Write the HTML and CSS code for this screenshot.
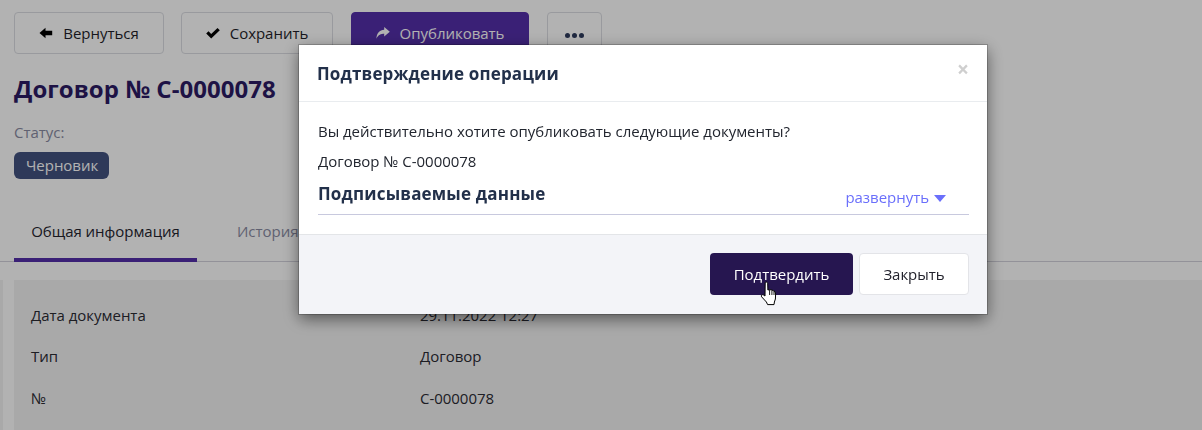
FILE: index.html
```html
<!DOCTYPE html>
<html lang="ru">
<head>
<meta charset="utf-8">
<title>Договор № С-0000078</title>
<link rel="stylesheet" href="styles.css">
</head>
<body>
<main class="page">
  <div class="toolbar">
    <button class="btn btn-back"><svg class="ico" viewBox="0 0 14 14"><path d="M0.5 7 L6.5 1.8 V4.8 H13.2 V9.2 H6.5 V12.2 Z"/></svg>Вернуться</button>
    <button class="btn btn-save"><svg class="ico" viewBox="0 0 14 14"><path d="M0.2 7.6 L2.5 5.3 L5.2 8 L11.5 1.9 L13.8 4.2 L5.2 12.4 Z"/></svg>Сохранить</button>
    <button class="btn btn-pub"><svg class="ico" viewBox="0 0 14 14"><path d="M8.2 1 L13.8 5.8 L8.2 10.6 V7.8 C5 7.8 2.4 8.6 0.4 12.8 C0.6 7.4 3.6 4 8.2 3.8 Z"/></svg>Опубликовать</button>
    <button class="btn btn-more"><span class="dot"></span><span class="dot"></span><span class="dot"></span></button>
  </div>
  <h1 class="doc-title">Договор № С-0000078</h1>
  <div class="status-label">Статус:</div>
  <span class="badge">Черновик</span>
  <nav class="tabs">
    <a class="tab active">Общая информация</a>
    <a class="tab">История</a>
  </nav>
  <div class="content">
    <div class="strip"></div>
    <section class="panel">
      <div class="row"><span class="key">Дата документа</span><span>29.11.2022 12:27</span></div>
      <div class="row"><span class="key">Тип</span><span>Договор</span></div>
      <div class="row"><span class="key">№</span><span>С-0000078</span></div>
    </section>
  </div>
</main>
<div class="overlay"></div>
<div class="modal">
  <header class="modal-head">
    <h2 class="modal-title">Подтверждение операции</h2>
    <span class="close">×</span>
  </header>
  <div class="modal-body">
    <p class="line">Вы действительно хотите опубликовать следующие документы?</p>
    <p class="line line-doc">Договор № С-0000078</p>
    <div class="signed">
      <h3 class="signed-title">Подписываемые данные</h3>
      <a class="expand">развернуть<span class="caret"></span></a>
    </div>
  </div>
  <footer class="modal-foot">
    <button class="mbtn mbtn-primary">Подтвердить</button>
    <button class="mbtn mbtn-close">Закрыть</button>
  </footer>
</div>
<svg class="cursor" viewBox="0 0 18 25"><path d="M5.2 1.5 C6.3 0.6 7.6 1.2 7.7 2.6 L7.9 9 L9.8 8.6 L11.6 9 L13.4 9.6 L15 10.6 L15.6 13 L15.4 18 L14.4 21 L14 23.6 L7.6 23.6 L6.4 21 L1.6 15.8 C0.8 14.6 1.8 13.2 3.2 13.8 L5 15 Z" fill="#fff" stroke="#000" stroke-width="1"/><path d="M9.6 9 V14 M11.9 9.4 V14 M14 10 V14" stroke="#000" stroke-width=".9" fill="none"/></svg>
</body>
</html>
```
FILE: styles.css
```css
* { box-sizing: border-box; }
html, body { margin: 0; height: 430px; overflow: hidden; }
body { background: #fff; font-family: "Open Sans", "Noto Sans", sans-serif; font-size: 15px; letter-spacing: -.03px; color: #2b2b33; }

.page { padding: 12px 0 0; height: 430px; overflow: hidden; }

.toolbar { display: flex; padding-left: 14px; gap: 17px; }
.btn { height: 42px; border: 1px solid #dcdde3; border-radius: 4px; background: #fff; font: 15px "Open Sans", "Noto Sans", sans-serif; letter-spacing: inherit; color: #1f1f2a; display: flex; align-items: center; justify-content: center; padding: 0; }
.btn-back { width: 150px; }
.btn-save { width: 152px; }
.btn-pub { width: 178px; margin-left: 1px; background: #542fa9; border-color: #542fa9; color: #fff; }
.btn-more { width: 55px; margin-left: 1px; gap: 2px; padding-top: 4px; }
.ico { width: 14px; height: 14px; margin-right: 10px; fill: currentColor; }
.btn-back .ico { fill: #000; }
.btn-save .ico { fill: #000; }
.dot { width: 5px; height: 5px; border-radius: 50%; background: #2d3a5c; }

.doc-title { margin: 18px 0 0 14px; font-size: 24px; line-height: 33px; font-weight: 700; letter-spacing: .05px; color: #2c1b64; }
.status-label { margin: 17px 0 0 14px; line-height: 20px; color: #8a8ca3; }
.badge { display: inline-block; margin: 10px 0 0 14px; height: 27px; line-height: 26px; padding: 0 11px 0 12px; border-radius: 6px; background: #435280; color: #fff; }

.tabs { display: flex; margin-top: 25px; height: 58px; border-bottom: 1px solid #d3d2dc; padding-left: 14px; }
.tab { width: 183px; height: 58px; text-align: center; line-height: 54px; color: #8a8ca3; }
.tab.active { color: #25252f; border-bottom: 4px solid #542fa9; }
.tab + .tab { text-align: left; padding-left: 40px; }

.content { display: flex; margin-top: 18px; }
.strip { width: 3px; height: 150px; background: #f3f3f3; flex: none; }
.panel { flex: 1; margin: 0 0 0 11px; height: 160px; background: #f3f3f3; padding: 14.5px 17px; }
.row { display: flex; height: 41.5px; line-height: 41.5px; }
.key { width: 389px; }

.overlay { position: fixed; inset: 0; background: rgba(0, 0, 0, .3); }

.modal { position: fixed; left: 299px; top: 45px; width: 688px; height: 269px; background: #fff; box-shadow: 0 5px 15px rgba(0, 0, 0, .5); outline: 1px solid rgba(0, 0, 0, .2); display: flex; flex-direction: column; }
.modal-head { height: 57px; flex: none; border-bottom: 1px solid #e9ecef; display: flex; justify-content: space-between; padding: 0 18px 0 18px; align-items: center; }
.modal-title { margin: 0; font-size: 17px; font-weight: 700; color: #22304a; letter-spacing: .16px; }
.close { font-size: 21px; font-weight: 700; color: #cfcfcf; line-height: 21px; margin-top: -8px; }
.modal-body { height: 133px; flex: none; padding: 19px 18px 0 19px; border-bottom: 1px solid #e3e5e8; }
.line { margin: 0 0 10px; line-height: 20px; color: #22262f; }
.line-doc { margin-bottom: 0; }
.signed { display: flex; justify-content: space-between; height: 31px; margin-top: 13px; border-bottom: 1px solid #c8c9de; }
.signed-title { margin: -1px 0 0; font-size: 17px; line-height: 22px; font-weight: 700; color: #22304a; letter-spacing: .18px; }
.expand { color: #6a6ffb; line-height: 24px; margin: 3px 23px 0 0; display: flex; align-items: center; height: 20px; }
.caret { width: 0; height: 0; margin: 2px 0 0 5px; border: 6px solid transparent; border-top: 7px solid #6a6ffb; border-bottom: 0; }
.modal-foot { flex: 1; background: #f3f4f8; display: flex; justify-content: flex-end; align-items: flex-start; padding: 18px 18px 0 0; gap: 6px; }
.mbtn { height: 42px; border-radius: 4px; font: 15px "Open Sans", "Noto Sans", sans-serif; letter-spacing: inherit; padding: 0; }
.mbtn-primary { width: 143px; background: #261650; border: 0; color: #fff; }
.mbtn-close { width: 110px; background: #fff; border: 1px solid #e3e4e8; color: #22222c; }

.cursor { position: fixed; left: 760px; top: 281px; width: 18px; height: 25px; }
```
